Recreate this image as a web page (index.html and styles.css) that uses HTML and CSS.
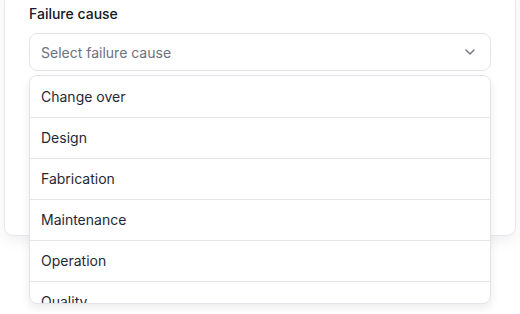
FILE: index.html
```html
<!DOCTYPE html>
<html>
<head>
    <title>Failure cause</title>
    <link rel="stylesheet" href="styles.css">
</head>
<body>

<div class="form-card">
    <!-- Failure cause field -->
    <div class="field">
        <label class="field-label" for="failureCause">Failure cause</label>
        <div class="select-wrap">
            <button class="select-box" id="failureCause" type="button">
                <span class="select-placeholder">Select failure cause</span>
                <svg class="chevron" width="16" height="16" viewBox="0 0 24 24" fill="none" stroke="currentColor" stroke-width="2" stroke-linecap="round" stroke-linejoin="round"><path d="m6 9 6 6 6-6"/></svg>
            </button>

            <!-- Open dropdown menu -->
            <ul class="select-menu">
                <li class="menu-item">Change over</li>
                <li class="menu-item">Design</li>
                <li class="menu-item">Fabrication</li>
                <li class="menu-item">Maintenance</li>
                <li class="menu-item">Operation</li>
                <li class="menu-item">Quality</li>
                <li class="menu-item">Other</li>
            </ul>
        </div>
    </div>
</div>

</body>
</html>
```

FILE: styles.css
```css
html, body {
    min-height: 100vh;
}

body {
    margin: 0;
    background: #fff;
    font-family: Inter, "Noto Sans", sans-serif;
    color: #111827;
}

.form-card {
    margin: -12px 4px 0 4px;
    padding: 15px 24px 0 24px;
    height: 231px;
    background: #fff;
    border: 1px solid #e6e8ee;
    border-radius: 0 0 9px 9px;
    box-shadow: 0 6px 14px rgba(0,0,0,0.06);
}

.field-label {
    display: block;
    font-size: 14px;
    line-height: 20px;
    font-weight: 500;
    color: #111827;
    margin-bottom: 9px;
}

.select-wrap {
    position: relative;
}

.select-box {
    display: flex;
    align-items: center;
    justify-content: space-between;
    width: 100%;
    height: 38px;
    padding: 0 12px 0 11px;
    background: #fff;
    border: 1px solid #e2e4ea;
    border-radius: 8px;
    font-family: inherit;
    font-size: 14px;
    cursor: pointer;
}

.select-placeholder {
    color: #6b7280;
}

.chevron {
    color: #6b7280;
}

.select-menu {
    position: absolute;
    top: 42px;
    left: 0;
    right: 0;
    height: 226px;
    overflow: hidden;
    margin: 0;
    padding: 1px 0 0 0;
    list-style: none;
    background: #fff;
    border: 1px solid #e2e4ea;
    border-radius: 8px;
    box-shadow: 0 4px 10px rgba(0,0,0,0.08);
}

.menu-item {
    height: 40px;
    line-height: 40px;
    padding: 0 11px;
    font-size: 14px;
    color: #1f2937;
    border-bottom: 1px solid #e5e7eb;
}
```
